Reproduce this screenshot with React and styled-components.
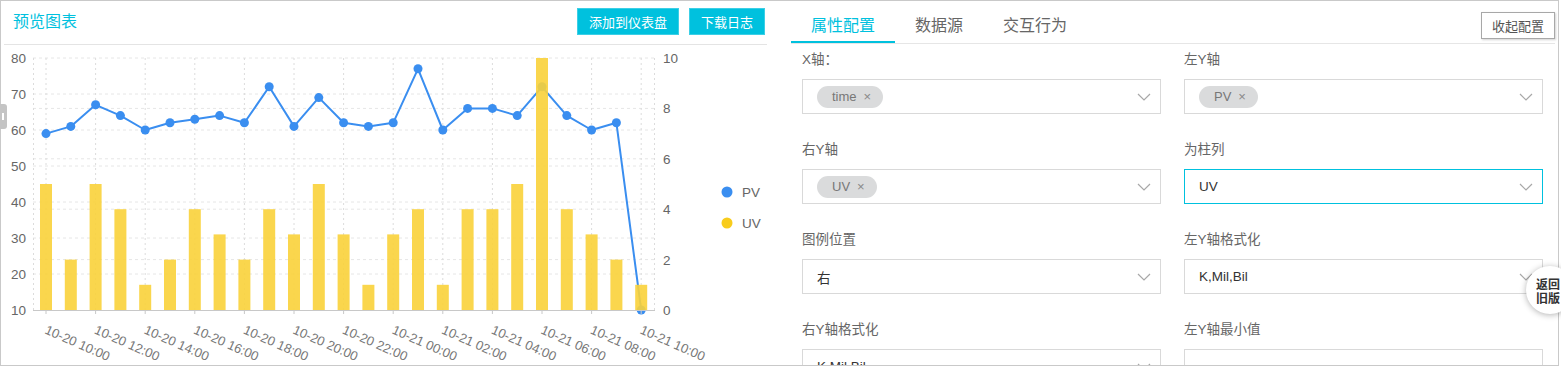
import React from 'react';
import styled, { createGlobalStyle } from 'styled-components';

const GlobalStyle = createGlobalStyle`
  html, body { margin: 0; padding: 0; background: #fff; overflow: hidden; }
  body { font-family: "Liberation Sans", "Noto Sans CJK SC", sans-serif; }
`;

const Page = styled.div`
  position: relative;
  width: 1561px;
  height: 366px;
  overflow: hidden;
`;

const Frame = styled.div`
  width: 1559px;
  height: 366px;
  box-sizing: border-box;
  border: 1px solid #c9c9c9;
  display: flex;
  overflow: hidden;
  background: #fff;
`;

const LeftPanel = styled.section`
  width: 774px;
  flex: none;
  display: flex;
  flex-direction: column;
`;

const ChartHeader = styled.header`
  height: 44px;
  margin: 0 8px 0 3px;
  padding: 7px 2px 0 9px;
  box-sizing: border-box;
  border-bottom: 1px solid #e4e4e4;
  display: flex;
  align-items: flex-start;
  gap: 10px;
`;

const ChartTitle = styled.h2`
  flex: 1;
  margin: 0;
  font-size: 16px;
  font-weight: normal;
  line-height: 27px;
  color: #00c1de;
`;

const PrimaryButton = styled.button`
  height: 27px;
  box-sizing: border-box;
  padding: 0 11px;
  border: 1px solid #3ccfe6;
  background: #00c1de;
  color: #fff;
  font-family: inherit;
  font-size: 13px;
  cursor: pointer;
`;

const ChartSvg = styled.svg`
  display: block;
`;

const AxisText = styled.text`
  font-family: "Liberation Sans", sans-serif;
  font-size: 13.5px;
  fill: #666;
`;

const TickLabel = styled.text`
  font-family: "Liberation Sans", sans-serif;
  font-size: 13px;
  fill: #777;
`;

const EdgeHandle = styled.div`
  position: absolute;
  left: 0;
  top: 104px;
  width: 7px;
  height: 25px;
  background: #c4c4c4;
  border-radius: 0 3px 3px 0;
  &::after {
    content: "";
    position: absolute;
    left: 2px;
    top: 9px;
    width: 2px;
    height: 7px;
    background: #fff;
  }
`;

const RightPanel = styled.section`
  flex: 1;
  display: flex;
  flex-direction: column;
  min-width: 0;
`;

const TabBar = styled.nav`
  display: flex;
  height: 43px;
  box-sizing: border-box;
  margin: 0 3px 0 16px;
  border-bottom: 1px solid #e6e6e6;
`;

const Tab = styled.div`
  height: 42px;
  box-sizing: border-box;
  padding: 6px 20px 0;
  display: flex;
  align-items: center;
  font-size: 16px;
  color: ${p => (p.$active ? '#00c1de' : '#666')};
  border-bottom: 2px solid ${p => (p.$active ? '#00c1de' : 'transparent')};
`;

const CollapseButton = styled.button`
  margin-left: auto;
  margin-top: 11px;
  align-self: flex-start;
  width: 74px;
  height: 27px;
  box-sizing: border-box;
  padding: 0;
  border: 1px solid #a8a8a8;
  box-shadow: 1px 1px 2px rgba(0, 0, 0, 0.18);
  background: #fff;
  color: #555;
  font-family: inherit;
  font-size: 13px;
`;

const Form = styled.div`
  display: grid;
  grid-template-columns: 359px 359px;
  column-gap: 23px;
  row-gap: 26px;
  padding: 6px 0 0 27px;
`;

const Field = styled.div`
  display: flex;
  flex-direction: column;
`;

const Label = styled.label`
  font-size: 13.5px;
  line-height: 20px;
  color: #666;
  margin-bottom: 9px;
`;

const SelectBox = styled.div`
  height: 35px;
  box-sizing: border-box;
  border: 1px solid ${p => (p.$focused ? '#00c1de' : '#d9d9d9')};
  display: flex;
  align-items: center;
  justify-content: space-between;
  padding: 0 9px 0 14px;
  background: #fff;
`;

const Value = styled.span`
  font-size: 13.5px;
  color: #333;
`;

const Tag = styled.span`
  display: inline-flex;
  align-items: center;
  gap: 7px;
  height: 22px;
  padding: 0 12px 0 15px;
  border-radius: 11px;
  background: #dadbdc;
  color: #777;
  font-size: 13px;
`;

const TagClose = styled.span`
  font-size: 13px;
  color: #888;
`;

const BackBadge = styled.div`
  position: absolute;
  left: 1526px;
  top: 266px;
  width: 48px;
  height: 48px;
  box-sizing: border-box;
  border-radius: 50%;
  background: #fff;
  box-shadow: 0 1px 6px rgba(0, 0, 0, 0.3);
  display: flex;
  flex-direction: column;
  justify-content: center;
  padding: 2px 0 0 10px;
  font-family: "Noto Sans CJK SC", sans-serif;
  font-size: 12px;
  font-weight: bold;
  line-height: 14px;
  color: #333;
`;

const Chevron = () => (
  <svg width="14" height="8" viewBox="0 0 14 8">
    <polyline points="1,1 7,7 13,1" fill="none" stroke="#a8a8a8" strokeWidth="1.2" />
  </svg>
);

const PV = [59, 61, 67, 64, 60, 62, 63, 64, 62, 72, 61, 69, 62, 61, 62, 77, 60, 66, 66, 64, 72, 64, 60, 62, 10];
const UV = [5, 2, 5, 4, 1, 2, 4, 3, 2, 4, 3, 5, 3, 1, 3, 4, 1, 4, 4, 5, 10, 4, 3, 2, 1];
const X0 = 46;
const DX = 24.8;
const xOf = i => X0 + i * DX;
const yL = v => 310 - ((v - 10) * 36) / 10;
const yR = v => 310 - v * 25.2;
const BLUE = '#3a8ef0';
const YELLOW = '#f9d23a';

const leftTicks = [80, 70, 60, 50, 40, 30, 20, 10];
const rightTicks = [10, 8, 6, 4, 2, 0];
const xTicks = Array.from({ length: 13 }, (_, k) => {
  const hour = 10 + 2 * k;
  const day = hour >= 24 ? '10-21' : '10-20';
  const h = String(hour % 24).padStart(2, '0');
  return { x: xOf(2 * k), label: `${day} ${h}:00` };
});

function Chart() {
  const linePts = PV.map((v, i) => `${xOf(i)},${yL(v)}`).join(' ');
  return (
    <ChartSvg width="774" height="320" viewBox="1 45 774 320">
      <g stroke="#e6e6e6" strokeWidth="1" strokeDasharray="3 3">
        {leftTicks.slice(0, -1).map(t => (
          <line key={'l' + t} x1="33" x2="655" y1={yL(t)} y2={yL(t)} />
        ))}
        {rightTicks.slice(1, -1).map(t => (
          <line key={'r' + t} x1="33" x2="655" y1={yR(t)} y2={yR(t)} />
        ))}
      </g>
      <g stroke="#dcdcdc" strokeWidth="1" strokeDasharray="2 3">
        <line x1="33.5" x2="33.5" y1="58" y2="310" />
        <line x1="654.5" x2="654.5" y1="58" y2="310" />
        {xTicks.map(t => (
          <line key={t.x} x1={t.x} x2={t.x} y1="58" y2="310" />
        ))}
      </g>
      <polyline points={linePts} fill="none" stroke={BLUE} strokeWidth="2" strokeLinejoin="round" />
      {PV.map((v, i) => (
        <circle key={i} cx={xOf(i)} cy={yL(v)} r="4.5" fill={BLUE} />
      ))}
      {UV.map((v, i) => (
        <rect key={i} x={xOf(i) - 6} y={yR(v)} width="12" height={310 - yR(v)} fill={YELLOW} fillOpacity="0.9" />
      ))}
      <line x1="33" x2="655" y1="310.5" y2="310.5" stroke="#c8c8c8" />
      {xTicks.map(t => (
        <line key={'t' + t.x} x1={t.x} x2={t.x} y1="310" y2="314" stroke="#c8c8c8" />
      ))}
      {leftTicks.map(t => (
        <AxisText key={t} x="26" y={yL(t) + 5} textAnchor="end">{t}</AxisText>
      ))}
      {rightTicks.map(t => (
        <AxisText key={t} x="663" y={yR(t) + 5}>{t}</AxisText>
      ))}
      {xTicks.map(t => (
        <TickLabel key={'x' + t.x} x={t.x - 2} y="333" transform={`rotate(24 ${t.x - 2} 333)`}>
          {t.label}
        </TickLabel>
      ))}
      <circle cx="727" cy="192" r="5.5" fill={BLUE} />
      <AxisText x="742" y="197">PV</AxisText>
      <circle cx="727" cy="223" r="5.5" fill="#f8cc1c" />
      <AxisText x="742" y="228">UV</AxisText>
    </ChartSvg>
  );
}

const fields = [
  { label: 'X轴：', tag: 'time' },
  { label: '左Y轴', tag: 'PV' },
  { label: '右Y轴', tag: 'UV' },
  { label: '为柱列', value: 'UV', focused: true },
  { label: '图例位置', value: '右' },
  { label: '左Y轴格式化', value: 'K,Mil,Bil' },
  { label: '右Y轴格式化', value: 'K,Mil,Bil' },
  { label: '左Y轴最小值', value: '' },
];

export default function App() {
  return (
    <Page>
      <GlobalStyle />
      <Frame>
        <LeftPanel>
          <ChartHeader>
            <ChartTitle>预览图表</ChartTitle>
            <PrimaryButton>添加到仪表盘</PrimaryButton>
            <PrimaryButton>下载日志</PrimaryButton>
          </ChartHeader>
          <Chart />
        </LeftPanel>
        <RightPanel>
          <TabBar>
            <Tab $active>属性配置</Tab>
            <Tab>数据源</Tab>
            <Tab>交互行为</Tab>
            <CollapseButton>收起配置</CollapseButton>
          </TabBar>
          <Form>
            {fields.map(f => (
              <Field key={f.label}>
                <Label>{f.label}</Label>
                <SelectBox $focused={f.focused}>
                  {f.tag ? (
                    <Tag>
                      {f.tag}
                      <TagClose>×</TagClose>
                    </Tag>
                  ) : (
                    <Value>{f.value}</Value>
                  )}
                  {f.value !== '' && <Chevron />}
                </SelectBox>
              </Field>
            ))}
          </Form>
        </RightPanel>
      </Frame>
      <EdgeHandle />
      <BackBadge>
        <span>返回</span>
        <span>旧版</span>
      </BackBadge>
    </Page>
  );
}
